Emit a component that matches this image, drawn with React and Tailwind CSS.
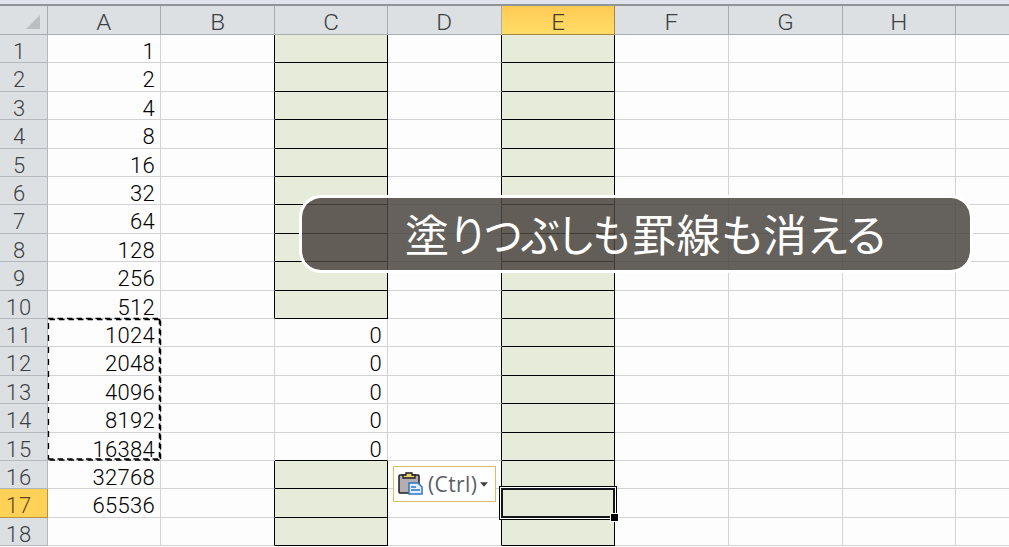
import React from 'react';

const COLUMNS = ['A', 'B', 'C', 'D', 'E', 'F', 'G', 'H', ''];
const ROWS = Array.from({ length: 18 }, (_, i) => i + 1);
const GRID = 'grid grid-rows-1 grid-cols-[48px_113px_114px_113px_114px_113px_114px_114px_113px_54px]';

const isFilled = (col, row) => col === 'E' || (col === 'C' && (row <= 10 || row >= 16));

const valueOf = (col, row) => {
    if (col === 'A' && row <= 17) return 2 ** (row - 1);
    if (col === 'C' && row >= 11 && row <= 15) return 0;
    return '';
};

const cellBorder = (col, row) => {
    const right = isFilled(col, row) || (col === 'D') || (col === 'B' && isFilled('C', row))
        ? 'border-r-black'
        : 'border-r-[#d2d3d4]';
    const bottom = isFilled(col, row) || (col === 'C' && row === 15)
        ? 'border-b-black'
        : 'border-b-[#d2d3d4]';
    return `${right} ${bottom}`;
};

const HeaderRow = () => (
    <div className={`${GRID} h-[29.1px]`}>
        <div className="flex items-end justify-end border-r border-b border-[#a9adb1] bg-[#dce0e3] pr-[7px] pb-[5px]">
            <svg width="14" height="14" viewBox="0 0 14 14">
                <path d="M14 0V14H0Z" fill="#bcbfc1" />
            </svg>
        </div>
        {COLUMNS.map((col) => (
            <div
                key={col}
                className={`flex items-start justify-center border-r border-b pt-[6px] text-[22px] leading-[22px] ${
                    col === 'E'
                        ? 'border-[#a5873f] bg-linear-to-b from-[#ffcb55] to-[#ffdd66] text-[#4a3e22]'
                        : 'border-[#a9adb1] bg-[#dce0e3] text-[#3c4043]'
                }`}
            >
                <span className="scale-x-110">{col}</span>
            </div>
        ))}
    </div>
);

const SheetRow = ({ row }) => (
    <div className={`${GRID} h-[28.4px]`}>
        <div
            className={`border-r border-b pt-[6px] text-[22px] leading-[21px] tracking-[0.8px] ${
                row >= 10 ? 'pl-[6px]' : 'pl-[13px]'
            } ${row === 17 ? 'border-[#b8923f] bg-[#ffd157] text-[#5b4718]' : 'border-[#b4b8bc] bg-[#dce0e3] text-[#3c4043]'}`}
        >
            {row}
        </div>
        {COLUMNS.map((col) => (
            <div
                key={col}
                className={`border-r border-b pt-[6px] pr-[5px] text-right text-[22px] leading-[21px] tracking-[0.3px] text-black ${
                    isFilled(col, row) ? 'bg-[#e7ebda]' : 'bg-[#fdfdfd]'
                } ${cellBorder(col, row)}`}
            >
                {valueOf(col, row)}
            </div>
        ))}
    </div>
);

const CopyMarquee = () => (
    <svg className="absolute top-[316px] left-[46px]" width="118" height="147" fill="none" stroke="#000">
        <g strokeWidth="1.500" strokeDasharray="5.500 4">
            <path d="M2 2.500H115" />
            <path d="M3.500 3.500H115" />
            <path d="M2 143H115" />
            <path d="M3.500 144H115" />
            <path d="M113.500 3V143" />
            <path d="M114.500 4.500V144" />
        </g>
        <path d="M2.500 7V143" strokeWidth="1.300" strokeDasharray="6 6" />
    </svg>
);

/* Cursor frame on E17 */
const ActiveCell = () => (
    <div className="absolute top-[486px] left-[499px] h-[34px] w-[118px] border border-black bg-white p-px">
        <div className="h-full border-2 border-[#15151c] bg-[#e7ebda]" />
        <div className="absolute -right-[3px] -bottom-[3px] size-[9px] border border-white bg-black" />
    </div>
);

const PasteOptions = () => (
    <div className="absolute top-[466px] left-[393px] flex h-[36px] w-[103px] items-center border border-[#dcbb66] bg-white pl-[4px]">
        <svg className="shrink-0" width="26" height="24" viewBox="0 0 26 24">
            <rect x="1" y="3" width="20" height="18" rx="1" fill="#b5aeb0" stroke="#1c1c22" strokeWidth="1.500" />
            <path d="M5 6V3H8V1H14V3H17V6Z" fill="#e9d36b" stroke="#1c1c22" strokeWidth="1.300" />
            <path d="M11 11H20L24 15V22H11Z" fill="#e3effc" stroke="#2f74c8" strokeWidth="1.500" />
            <path d="M13 15H18M13 18H22" stroke="#2f74c8" strokeWidth="1.300" />
        </svg>
        <span className="ml-[4px] font-['Open_Sans',sans-serif] text-[21px] leading-none font-normal tracking-[0.4px] text-[#5c5f66]">(Ctrl)</span>
        <svg className="ml-[3px] shrink-0" width="8" height="5" viewBox="0 0 9 5">
            <path d="M0 0H9L4.500 5Z" fill="#3f4248" />
        </svg>
    </div>
);

const Caption = () => (
    <div className="absolute top-[195px] left-[299px] flex h-[78px] w-[674px] items-center rounded-[22px] border-3 border-white bg-[#4a4540]/85 bg-clip-padding pb-[3px] pl-[103px]">
        <div className="flex font-['Noto_Sans_CJK_JP',sans-serif] text-[44px] leading-none font-normal whitespace-nowrap text-white [font-feature-settings:'palt']">
            <span className="w-[46px]">塗</span>
            <span className="w-[181px] origin-left scale-x-90">りつぶしも</span>
            <span className="tracking-[0.5px]">罫線も消える</span>
        </div>
    </div>
);

export default function App() {
    return (
        <div className="relative h-[547px] w-[1009px] overflow-hidden bg-[#fdfdfd] font-['Roboto',sans-serif] font-light">
            <div className="h-[6px] border-b-2 border-[#8f9499] bg-[#dfe3ee]" />
            <HeaderRow />
            {ROWS.map((row) => (
                <SheetRow key={row} row={row} />
            ))}
            <CopyMarquee />
            <ActiveCell />
            <PasteOptions />
            <Caption />
        </div>
    );
}
